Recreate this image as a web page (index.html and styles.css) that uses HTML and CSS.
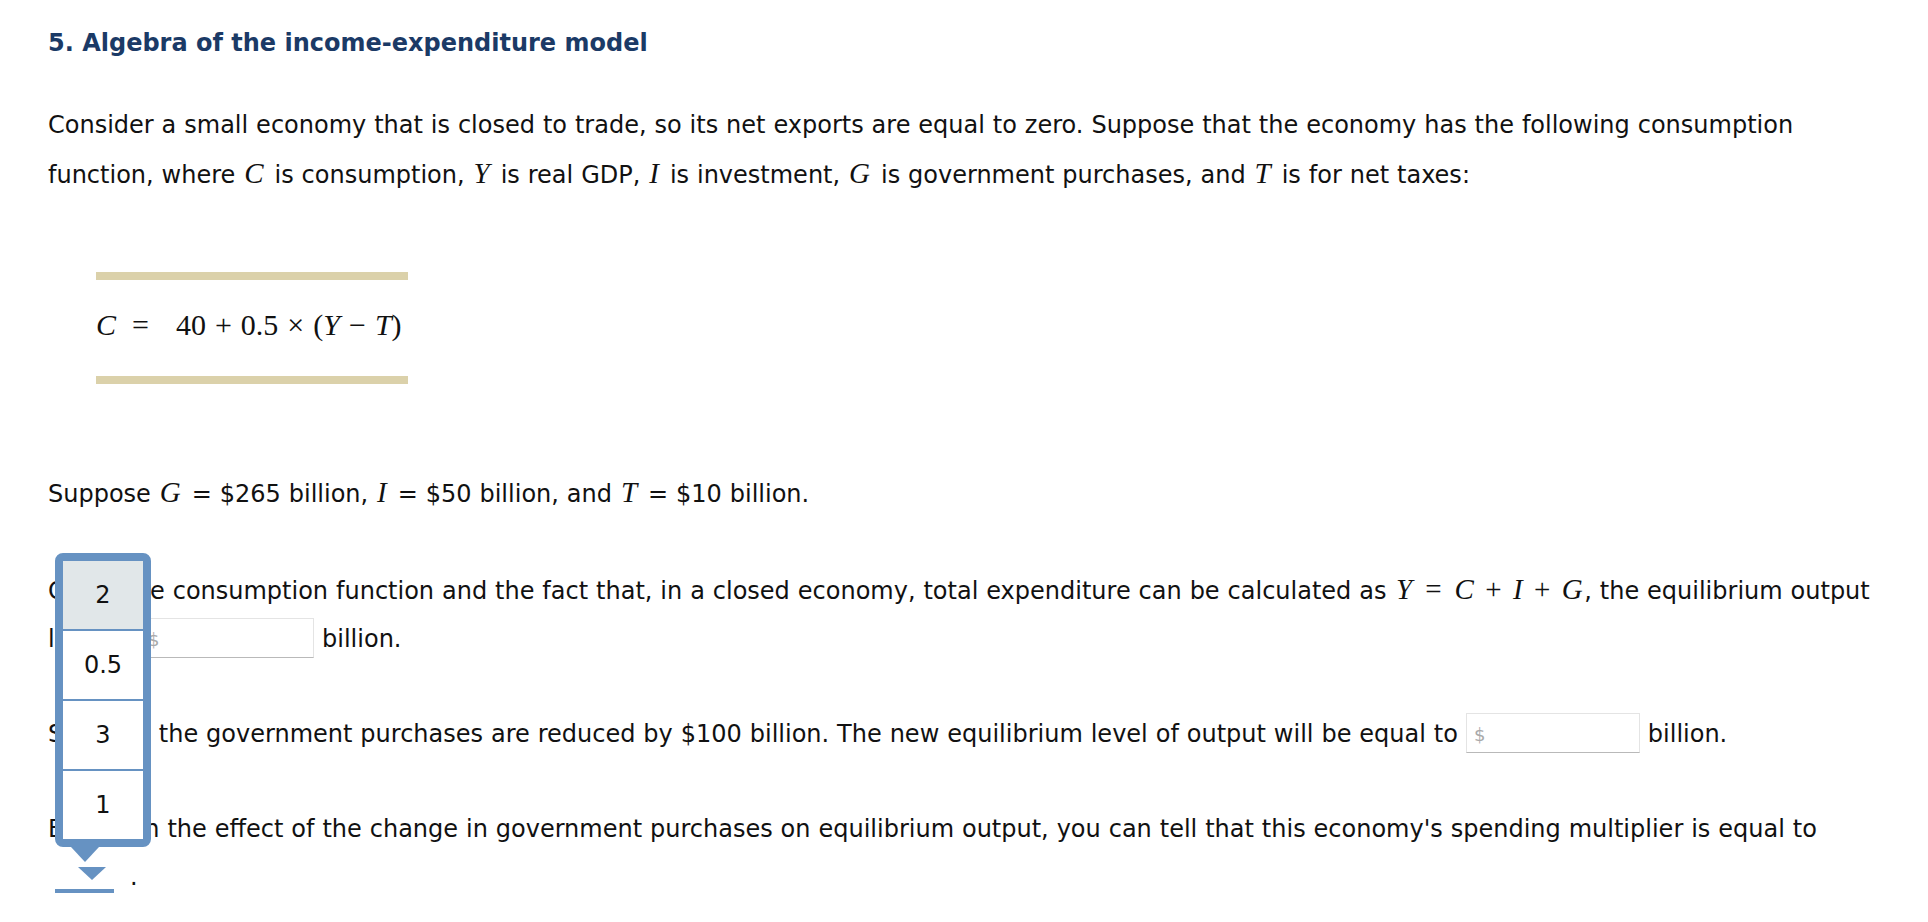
FILE: index.html
```html
<!DOCTYPE html>
<html>
<head>
<meta charset="utf-8">
<link rel="stylesheet" href="styles.css">
</head>
<body>
<div class="page">
  <h1 class="title">5. Algebra of the income-expenditure model</h1>
  <p class="para">Consider a small economy that is closed to trade, so its net exports are equal to zero. Suppose that the economy has the following consumption function, where <span class="m">C</span> is consumption, <span class="m">Y</span> is real GDP, <span class="m">I</span> is investment, <span class="m">G</span> is government purchases, and <span class="m">T</span> is for net taxes:</p>

  <div class="eqbox">
    <div class="eq"><span class="mi">C</span><span class="eqsign">=</span><span>40</span><span class="bin">+</span><span>0.5</span><span class="bin">×</span><span>(</span><span class="mi">Y</span><span class="bin">−</span><span class="mi">T</span><span>)</span></div>
  </div>

  <p class="para given">Suppose <span class="m">G</span> = $265 billion, <span class="m">I</span> = $50 billion, and <span class="m">T</span> = $10 billion.</p>

  <p class="para q q1">Given the consumption function and the fact that, in a closed economy, total expenditure can be calculated as <span class="mexpr"><span class="mi">Y</span><span class="rel">=</span><span class="mi">C</span><span class="op">+</span><span class="mi">I</span><span class="op">+</span><span class="mi">G</span></span>, the equilibrium output level is <span class="inbox"><span class="dollar">$</span></span> billion.</p>

  <p class="para q">Suppose the government purchases are reduced by $100 billion. The new equilibrium level of output will be equal to <span class="inbox"><span class="dollar">$</span></span> billion.</p>

  <p class="para q">Based on the effect of the change in government purchases on equilibrium output, you can tell that this economy's spending multiplier is equal to <span class="tail"><span class="ddwrap"><span class="dd"><span class="ddarrow"></span></span><span class="menu"><span class="opt sel">2</span><span class="opt">0.5</span><span class="opt">3</span><span class="opt">1</span><span class="menuptr"></span></span></span> .</span></p>
</div>
</body>
</html>
```

FILE: styles.css
```css
html, body {
  margin: 0;
  padding: 0;
  background: #ffffff;
}
.page {
  padding: 27px 0 0 48px;
  font-family: "DejaVu Sans", Verdana, sans-serif;
  font-size: 24px;
  word-spacing: 0.3px;
  color: #111111;
}
.title {
  margin: 0;
  font-size: 24px;
  line-height: 32px;
  font-weight: bold;
  color: #1b3a66;
  word-spacing: 0;
}
.para {
  margin: 42px 0 0 0;
  line-height: 48px;
  width: 1825px;
}
.m, .mi {
  font-family: "Liberation Serif", "Times New Roman", serif;
  font-style: italic;
  font-size: 29px;
  word-spacing: 0;
}
.m {
  padding: 0 3px 0 1px;
}
.mexpr {
  font-family: "Liberation Serif", "Times New Roman", serif;
  font-size: 29px;
  word-spacing: 0;
}
.mexpr .mi {
  padding: 0 1.5px;
}
.rel {
  margin: 0 0.4em;
}
.op {
  margin: 0 0.34em;
}
.eqbox {
  margin: 73px 0 0 48px;
  width: 312px;
  border-top: 8px solid #dbd1aa;
  border-bottom: 8px solid #dbd1aa;
  height: 96px;
  box-sizing: content-box;
  display: flex;
  align-items: center;
}
.eq {
  font-family: "Liberation Serif", "Times New Roman", serif;
  font-size: 30px;
  white-space: nowrap;
  display: flex;
  align-items: baseline;
  position: relative;
  top: -3px;
}
.eq .mi {
  font-size: 30px;
}
.eqsign {
  margin: 0 27px 0 16px;
}
.bin {
  margin: 0 9px;
}
.given {
  margin-top: 84px;
}
.q {
  margin-top: 47px;
}
.inbox {
  display: inline-block;
  vertical-align: middle;
  width: 174px;
  height: 40px;
  border: 1px solid #e4e4e4;
  border-bottom-color: #b9b9b9;
  box-sizing: border-box;
  position: relative;
  top: -2px;
  line-height: 38px;
  padding-left: 7px;
  text-align: left;
}
.dollar {
  color: #a9a9a9;
  font-size: 18px;
}
.tail {
  white-space: nowrap;
}
.ddwrap {
  display: inline-block;
  position: relative;
  margin-left: 7px;
  margin-right: 8px;
  vertical-align: baseline;
}
.dd {
  display: inline-block;
  width: 59px;
  height: 26px;
  border-bottom: 4px solid #6692c2;
  position: relative;
  top: 8px;
  box-sizing: content-box;
}
.ddarrow {
  position: absolute;
  left: 23px;
  top: 4px;
  width: 0;
  height: 0;
  border-left: 14px solid transparent;
  border-right: 14px solid transparent;
  border-top: 13px solid #6692c2;
}
.menu {
  position: absolute;
  left: 0;
  bottom: 54px;
  width: 80px;
  border: 8px solid #6692c2;
  border-radius: 8px;
  background: #6692c2;
  display: flex;
  flex-direction: column;
  gap: 2px;
}
.opt {
  height: 68px;
  background: #ffffff;
  display: flex;
  align-items: center;
  justify-content: center;
  font-size: 24px;
  color: #111111;
  line-height: 1;
  word-spacing: 0;
}
.opt.sel {
  background: #e1e7e9;
}
.menuptr {
  position: absolute;
  left: 8px;
  bottom: -23px;
  width: 0;
  height: 0;
  border-left: 14px solid transparent;
  border-right: 14px solid transparent;
  border-top: 15px solid #6692c2;
}
```
